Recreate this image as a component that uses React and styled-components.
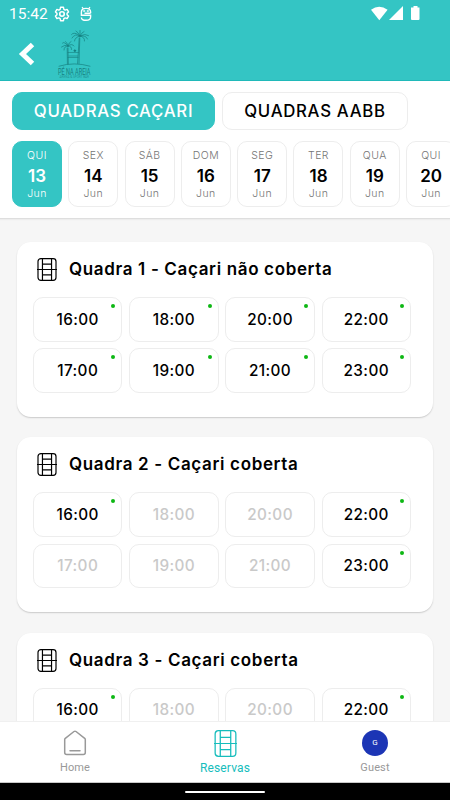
import React, { useState } from "react";
import styled, { createGlobalStyle } from "styled-components";

const days = [
  { week: "QUI", day: 13 },
  { week: "SEX", day: 14 },
  { week: "SÁB", day: 15 },
  { week: "DOM", day: 16 },
  { week: "SEG", day: 17 },
  { week: "TER", day: 18 },
  { week: "QUA", day: 19 },
  { week: "QUI", day: 20 },
];

const hours = [
  "16:00",
  "18:00",
  "20:00",
  "22:00",
  "17:00",
  "19:00",
  "21:00",
  "23:00",
];

const courts = [
  { name: "Quadra 1 - Caçari não coberta", free: hours },
  { name: "Quadra 2 - Caçari coberta", free: ["16:00", "22:00", "23:00"] },
  {
    name: "Quadra 3 - Caçari coberta",
    hours: hours.slice(0, 4),
    free: ["16:00", "22:00"],
  },
];

const CourtIcon = ({ width, height, stroke = 1.1 }) => (
  <svg
    width={width}
    height={height}
    viewBox="0 0 22 26"
    preserveAspectRatio="none"
    fill="none"
    stroke="currentColor"
    strokeWidth={stroke}
  >
    <rect x="1.1" y="0.7" width="19.8" height="24.6" rx="3.2" />
    <path d="M6 0.7V25.3M16 0.7V25.3M0 13H22M6 7H16M6 19H16" />
  </svg>
);

const Logo = () => (
  <svg
    width="40"
    height="52"
    viewBox="0 0 40 52"
    fill="none"
    stroke="#167f80"
    strokeWidth="0.7"
    strokeLinecap="round"
  >
    <path d="M2 36.2Q17 31.5 33 36.2" strokeWidth="0.7" />
    <path d="M10.2 18L10.4 34M11 18L11.3 34M22.2 8L20.6 33.5M22.8 8L22 33.5" />
    <path d="M11 16Q8 14 4.5 17M11 16Q7 11 5.5 13M11 16Q10 12 8.5 11.5M11 16Q12 12 14 11.5M11 16Q15 13 17 16M11 16Q7 16 7 20M11 16Q15 16 14.5 19.5" />
    <path d="M23 6Q18 3 15 8M23 6Q17 1 14.5 4.5M23 6Q21 2 19 1M23 6V0.5M23 6Q25 2 27 1.5M23 6Q28 3 31.5 5.5M23 6Q29 5 30.5 9M23 6Q18 7 17.5 11M23 6Q28 7 27.5 11" />
    <path d="M11 22.5H21.5M11 27.5H21M12 26H20.5" strokeWidth="0.6" />
    <circle cx="17.8" cy="20.7" r="0.9" fill="#167f80" />
    <text
      x="1"
      y="44.8"
      fill="#167f80"
      stroke="none"
      fontFamily="Roboto, sans-serif"
      fontSize="8.8"
      textLength="32.5"
      lengthAdjust="spacingAndGlyphs"
    >
      PÉ NA AREIA
    </text>
    <text
      x="2.5"
      y="48.2"
      fill="#219596"
      stroke="none"
      fontFamily="Roboto, sans-serif"
      fontSize="2.6"
      textLength="29.5"
      lengthAdjust="spacingAndGlyphs"
    >
      ARENA &amp; SPORT BAR
    </text>
  </svg>
);

const GearIcon = () => (
  <svg width="16" height="16" viewBox="0 0 24 24" fill="none" stroke="#fff">
    <path
      strokeWidth="2.2"
      strokeLinejoin="round"
      d="M9.8 2h4.4l.6 3 2 1.1 2.8-1 2.2 3.8-2.2 2v2.2l2.2 2-2.2 3.8-2.8-1-2 1.1-.6 3H9.8l-.6-3-2-1.1-2.8 1-2.2-3.8 2.2-2v-2.2l-2.2-2 2.2-3.8 2.8 1 2-1.1z"
    />
    <circle cx="12" cy="12" r="3.4" strokeWidth="2.4" />
  </svg>
);

const DebugIcon = () => (
  <svg width="12" height="16" viewBox="0 0 12 16" fill="none" stroke="#fff">
    <path d="M2 1L3.4 2.8M10 1L8.6 2.8" strokeWidth="1.2" />
    <path
      d="M1.4 7.2V6Q1.4 2.4 6 2.4T10.6 6V7.2M3.2 5H5.2M6.8 5H8.8"
      strokeWidth="1.4"
    />
    <path
      d="M1.4 7V9.2H10.6V11Q10.6 14.3 6 14.3T1.4 11.4M10.6 7.2H4.5"
      strokeWidth="1.4"
    />
  </svg>
);

const SignalIcons = () => (
  <svg width="50" height="16" viewBox="0 0 50 16" fill="#fff">
    <path d="M0 3.8Q8.2 -2.4 16.6 3.8L8.3 14.2Z" />
    <path d="M32 0V14H18Z" />
    <path d="M42.5 0H46.5V1.5H48.5V13Q48.5 14 47.5 14H41Q40 14 40 13V1.5H42.5Z" />
  </svg>
);

const App = () => {
  const [venue, setVenue] = useState(0);
  const [selectedDay, setSelectedDay] = useState(0);

  return (
    <Screen>
      <GlobalStyle />
      <Header>
        <StatusBar>
          <Clock>15:42</Clock>
          <GearIcon />
          <DebugIcon />
          <StatusRight>
            <SignalIcons />
          </StatusRight>
        </StatusBar>
        <TitleBar>
          <BackButton aria-label="Voltar">
            <svg width="18" height="24" viewBox="0 0 18 24" fill="none">
              <path d="M14.5 2.5L4.5 12L14.5 21.5" stroke="#fff" strokeWidth="5" />
            </svg>
          </BackButton>
          <Logo />
        </TitleBar>
      </Header>

      <Filters>
        <Venues>
          <Venue
            $active={venue === 0}
            $width={203}
            onClick={() => setVenue(0)}
          >
            QUADRAS CAÇARI
          </Venue>
          <Venue
            $active={venue === 1}
            $width={186}
            onClick={() => setVenue(1)}
          >
            QUADRAS AABB
          </Venue>
        </Venues>
        <Days>
          {days.map((item, index) => (
            <Day
              key={item.day}
              $active={selectedDay === index}
              onClick={() => setSelectedDay(index)}
            >
              <small>{item.week}</small>
              <strong>{item.day}</strong>
              <small>Jun</small>
            </Day>
          ))}
        </Days>
      </Filters>

      <Courts>
        {courts.map((court) => (
          <Card key={court.name}>
            <CardTitle>
              <CourtIcon width={20} height={23} stroke={1.3} />
              <h2>{court.name}</h2>
            </CardTitle>
            <Slots>
              {(court.hours || hours).map((hour) => {
                const free = court.free.includes(hour);
                return (
                  <Slot key={hour} $free={free} disabled={!free}>
                    {hour}
                    {free && <FreeDot />}
                  </Slot>
                );
              })}
            </Slots>
          </Card>
        ))}
      </Courts>

      <BottomNav>
        <NavItem>
          <NavIcon>
            <svg
              width="24"
              height="26"
              viewBox="0 0 24 26"
              fill="none"
              stroke="#999"
              strokeWidth="1.5"
              strokeLinejoin="round"
              strokeLinecap="round"
            >
              <path d="M1.7 9.6Q1.7 8.8 2.3 8.3L11 1.5Q12 0.8 13 1.5L21.7 8.3Q22.3 8.8 22.3 9.6V22.5Q22.3 24.5 20.3 24.5H3.7Q1.7 24.5 1.7 22.5Z" />
              <path d="M7 20.8H17" />
            </svg>
          </NavIcon>
          Home
        </NavItem>
        <NavItem $active>
          <NavIcon>
            <CourtIcon width={23} height={27} stroke={1.2} />
          </NavIcon>
          Reservas
        </NavItem>
        <NavItem>
          <NavIcon>
            <Avatar>G</Avatar>
          </NavIcon>
          Guest
        </NavItem>
      </BottomNav>
      <GestureBar>
        <span />
      </GestureBar>
    </Screen>
  );
};

export default App;

const GlobalStyle = createGlobalStyle`
  * {
    box-sizing: border-box;
  }
  body {
    margin: 0;
    overflow: hidden;
  }
  button {
    font-family: inherit;
    padding: 0;
    cursor: pointer;
  }
`;

const Screen = styled.div`
  width: 450px;
  height: 800px;
  display: flex;
  flex-direction: column;
  overflow: hidden;
  background: #f6f6f6;
  color: #000;
  font-family: Inter, "Open Sans", sans-serif;
`;

const Header = styled.header`
  height: 81px;
  flex-shrink: 0;
  background: #34c5c4;
  border-bottom: 1px solid #20b9b9;
`;

const StatusBar = styled.div`
  height: 27px;
  display: flex;
  align-items: center;
  padding: 0 19px 0 9px;
`;

const Clock = styled.span`
  width: 45px;
  color: #fff;
  font-family: Roboto, sans-serif;
  font-size: 15.5px;
  line-height: 18px;
  padding-top: 1px;

  & + svg {
    margin-right: 10px;
  }
`;

const StatusRight = styled.div`
  margin-left: auto;
  height: 15px;
  width: 60px;
`;

const TitleBar = styled.div`
  display: flex;
  align-items: flex-start;
  padding: 3px 0 0 18px;
`;

const BackButton = styled.button`
  width: 39px;
  height: 48px;
  display: flex;
  align-items: center;
  border: none;
  background: none;
`;

const Filters = styled.section`
  height: 138px;
  flex-shrink: 0;
  padding: 11px 0 0 12px;
  background: #fff;
  border-bottom: 1px solid #dedede;
  box-shadow: 0 1px 1px #ededed;
`;

const Venues = styled.div`
  display: flex;
  gap: 7px;
`;

const Venue = styled.button`
  width: ${({ $width }) => $width}px;
  height: 38px;
  border: 1px solid ${({ $active }) => ($active ? "#34c5c4" : "#ededed")};
  border-radius: 10px;
  background: ${({ $active }) => ($active ? "#34c5c4" : "#fff")};
  color: ${({ $active }) => ($active ? "#fff" : "#000")};
  font-size: 16.8px;
  font-weight: 500;
  letter-spacing: 0.7px;
  white-space: nowrap;
`;

const Days = styled.div`
  display: flex;
  gap: 6.3px;
  margin-top: 11px;
  overflow: hidden;
`;

const Day = styled.button`
  width: 50px;
  height: 66px;
  flex-shrink: 0;
  display: flex;
  flex-direction: column;
  align-items: center;
  padding-top: 7px;
  border: 1px solid ${({ $active }) => ($active ? "#34c5c4" : "#ededed")};
  border-radius: 10px;
  background: ${({ $active }) => ($active ? "#34c5c4" : "#fff")};
  color: ${({ $active }) => ($active ? "#fff" : "#000")};

  small {
    color: ${({ $active }) => ($active ? "#fff" : "#757575")};
    font-size: 10.5px;
    font-weight: 300;
    line-height: 13px;
    letter-spacing: 0.45px;
  }

  strong {
    padding-top: 4px;
    font-size: 17px;
    font-weight: 600;
    line-height: 21px;
  }
`;

const Courts = styled.main`
  flex: 1;
  min-height: 0;
  overflow: hidden;
  padding: 23px 17px 0;
`;

const Card = styled.article`
  height: 175px;
  margin-bottom: 20.3px;
  padding: 16px 22px 0 16px;
  border-radius: 14px;
  background: #fff;
  box-shadow: 0 1px 1.5px rgba(0, 0, 0, 0.18);
`;

const CardTitle = styled.div`
  height: 23px;
  display: flex;
  align-items: center;
  gap: 12px;
  padding-left: 4px;

  h2 {
    margin: 0;
    font-size: 17px;
    font-weight: 600;
    line-height: 23px;
    letter-spacing: 0.65px;
    white-space: nowrap;
  }
`;

const Slots = styled.div`
  display: grid;
  grid-template-columns: repeat(4, 89.4px);
  gap: 6.8px 6.8px;
  margin-top: 16px;
`;

const Slot = styled.button`
  position: relative;
  height: 44.5px;
  border: 1px solid #ededed;
  border-radius: 10px;
  background: #fff;
  color: ${({ $free }) => ($free ? "#000" : "#c9c9c9")};
  font-size: 15.3px;
  font-weight: 500;
  letter-spacing: 0.4px;
`;

const FreeDot = styled.span`
  position: absolute;
  top: 6px;
  right: 6px;
  width: 4px;
  height: 4px;
  border-radius: 50%;
  background: #0db714;
`;

const BottomNav = styled.nav`
  height: 62px;
  flex-shrink: 0;
  display: grid;
  grid-template-columns: repeat(3, 1fr);
  background: #fff;
  border-top: 1px solid #f0f0f0;
  border-bottom: 1px solid #c9c9c9;
`;

const NavItem = styled.div`
  display: flex;
  flex-direction: column;
  align-items: center;
  padding-top: 7px;
  color: ${({ $active }) => ($active ? "#16bdbc" : "#999")};
  font-family: Roboto, sans-serif;
  font-size: ${({ $active }) => ($active ? 12 : 11)}px;
  line-height: 16px;
  letter-spacing: 0.15px;
`;

const NavIcon = styled.div`
  height: 28px;
  display: flex;
  align-items: center;
  margin-bottom: 3px;
`;

const Avatar = styled.span`
  width: 26px;
  height: 26px;
  display: flex;
  align-items: center;
  justify-content: center;
  border-radius: 50%;
  background: #1c35b5;
  color: #fff;
  font-size: 8px;
`;

const GestureBar = styled.div`
  height: 17px;
  flex-shrink: 0;
  display: flex;
  justify-content: center;
  padding-top: 8px;
  background: #000;

  span {
    width: 80px;
    height: 2px;
    border-radius: 2px;
    background: #fff;
  }
`;
